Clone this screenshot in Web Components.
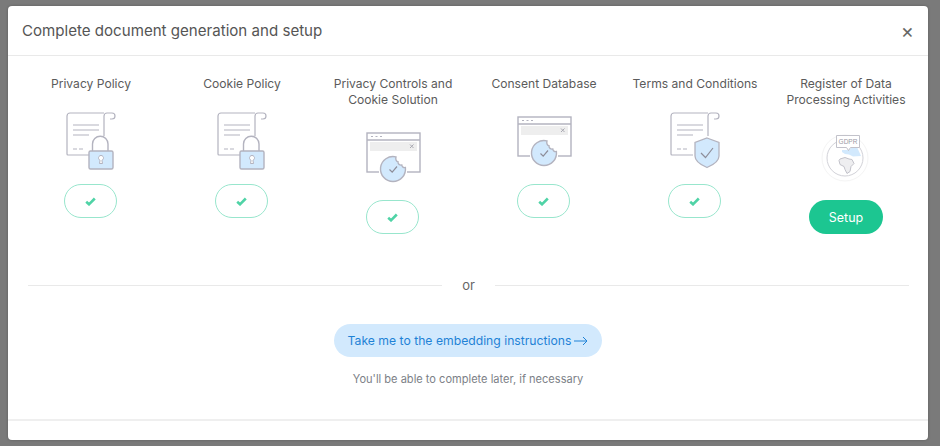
<!DOCTYPE html>
<html>
<head>
<meta charset="utf-8">
<title>Complete document generation and setup</title>
<style>
    html, body { margin: 0; height: 100%; }
    body {
        background: #7a7a7a;
        font-family: "Inter", "Liberation Sans", sans-serif;
        color: #5b5b5b;
    }
</style>
</head>
<body>
<setup-modal heading="Complete document generation and setup">
    <doc-item label="Privacy Policy"><doc-icon kind="lock"></doc-icon><check-pill></check-pill></doc-item>
    <doc-item label="Cookie Policy"><doc-icon kind="lock"></doc-icon><check-pill></check-pill></doc-item>
    <doc-item label="Privacy Controls and Cookie Solution"><doc-icon kind="cookie"></doc-icon><check-pill></check-pill></doc-item>
    <doc-item label="Consent Database"><doc-icon kind="cookie"></doc-icon><check-pill></check-pill></doc-item>
    <doc-item label="Terms and Conditions"><doc-icon kind="shield"></doc-icon><check-pill></check-pill></doc-item>
    <doc-item label="Register of Data Processing Activities"><doc-icon kind="gdpr"></doc-icon><setup-button>Setup</setup-button></doc-item>
    <or-divider slot="after"></or-divider>
    <embed-action slot="after" note="You'll be able to complete later, if necessary">Take me to the embedding instructions</embed-action>
</setup-modal>

<script>
const modalTemplate = document.createElement('template');
modalTemplate.innerHTML = `
<style>
    :host {
        display: flex;
        flex-direction: column;
        box-sizing: border-box;
        width: 920px;
        height: 434px;
        margin: 6px 0 0 8px;
        background: #fff;
        border-radius: 4px;
        box-shadow: 0 0 3px rgba(0, 0, 0, .25);
    }
    header {
        display: flex;
        align-items: center;
        justify-content: space-between;
        box-sizing: border-box;
        height: 50px;
        padding: 0 14px;
        border-bottom: 1px solid #e9e9e9;
    }
    h1 {
        margin: 0;
        font-size: 15.1px;
        font-weight: 400;
        color: #555;
    }
    .close {
        font-size: 20px;
        line-height: 20px;
        color: #666;
    }
    .items {
        display: grid;
        grid-template-columns: repeat(6, 151px);
        padding: 20px 7.5px 0;
        height: 214px;
        box-sizing: border-box;
    }
    .after {
        display: flex;
        flex-direction: column;
        flex: 1;
    }
    footer {
        height: 19px;
        border-top: 2px solid #efefef;
    }
</style>
<header>
    <h1></h1>
    <span class="close">×</span>
</header>
<div class="items"><slot></slot></div>
<div class="after"><slot name="after"></slot></div>
<footer></footer>
`;

class SetupModal extends HTMLElement {
    constructor() {
        super();
        this.attachShadow({ mode: "open" });
    }

    connectedCallback() {
        const clone = modalTemplate.content.cloneNode(true);
        clone.querySelector('h1').textContent = this.getAttribute('heading');
        this.shadowRoot.appendChild(clone);
    }
}

const itemTemplate = document.createElement('template');
itemTemplate.innerHTML = `
<style>
    :host {
        display: flex;
        flex-direction: column;
        align-items: center;
    }
    .label {
        box-sizing: border-box;
        width: 100%;
        padding: 0 8px;
        font-size: 12.1px;
        line-height: 16px;
        text-align: center;
        color: #5b5b5b;
    }
    ::slotted(doc-icon) { margin: 16px 0 12px; }
</style>
<div class="label"></div>
<slot></slot>
`;

class DocItem extends HTMLElement {
    constructor() {
        super();
        this.attachShadow({ mode: "open" });
    }

    connectedCallback() {
        const clone = itemTemplate.content.cloneNode(true);
        clone.querySelector('.label').textContent = this.getAttribute('label');
        this.shadowRoot.appendChild(clone);
    }
}

// paths shared by the icons, on a 64x64 box
const STROKE = '#b3b3bf';
const sheet = `
    <path d="M45 5H11a3 3 0 0 0-3 3v38a1 1 0 0 0 1 1h21M45 28V8a3 3 0 0 1 3-3h5a3 3 0 0 1 0 6h-2" fill="#fff" stroke="${STROKE}" stroke-width="1.2"/>
    <path d="M14 17h26M14 22h26M14 27h16M14 41h4M20 41h4" fill="none" stroke="${STROKE}" stroke-width="1.2"/>`;

const iconMarkup = {
    lock: sheet + `
    <path d="M33.5 43V36a7.7 7.700 0 0 1 15.500 0V43" fill="#fff" stroke="${STROKE}" stroke-width="1.4"/>
    <rect x="30" y="43" width="24" height="18" rx="1.5" fill="#d2e9fd" stroke="${STROKE}" stroke-width="1.4"/>
    <path d="M40.500 55.500h3l-.6-3.200a2.500 2.500 0 1 0-1.800 0z" fill="#fff" stroke="${STROKE}" stroke-width="1"/>`,
    shield: sheet + `
    <path d="M44 30l12 4.500V48c0 5-6 9-12 11.500C38 57 32 53 32 48V34.500z" fill="#d2e9fd" stroke="${STROKE}" stroke-width="1.3"/>
    <path d="M38 45l4.500 4.500L50 40" fill="none" stroke="#8e8e9a" stroke-width="1.2"/>`,
    cookie: `
    <rect x="6" y="9" width="53" height="39" fill="#fff" stroke="${STROKE}" stroke-width="1.4"/>
    <path d="M6 16h53" stroke="${STROKE}" stroke-width="1.4"/>
    <path d="M10 12.500h2M14.500 12.500h2M19 12.500h2" stroke="${STROKE}" stroke-width="1.200"/>
    <rect x="9" y="18" width="47" height="9" fill="#eeeeee"/>
    <path d="M49 20.500l3.500 3.500M52.500 20.500L49 24" stroke="#a9a9b2" stroke-width="1"/>
    <rect x="18" y="47" width="28" height="3" fill="#fff"/>
    <path d="M35 32.900A12.500 12.500 0 1 0 44.400 43.500c-2 .4-3.400-.6-3.600-2.500-2.200.4-4-.9-3.800-3.200-2-.5-2.600-2.700-2-4.900z" fill="#d2e9fd" stroke="${STROKE}" stroke-width="1.400"/>
    <path d="M28.500 45.500l2.700 2.700 4.800-5.700" fill="none" stroke="#8e8e9a" stroke-width="1.200"/>`,
    gdpr: `
    <circle cx="31" cy="34" r="23" fill="none" stroke="#f4f4f4" stroke-width="1"/>
    <circle cx="31" cy="34" r="18" fill="#fff" stroke="#d2d2d8" stroke-width="1"/>
    <path d="M28 26h5l3-1 3-3 4 1 4 9-8 .5-4-2-4-.500-3-2z" fill="#d2e9fd"/>
    <path d="M26 35l5-1.500 4 1.500 3 .5 2 4-3 3-1 5-3 2-2-4-1-3-4-2-1-4z" fill="#eeeef0" stroke="#c2c2ca" stroke-width="1"/>
    <path d="M22.500 11.500h23v12h-9l-2 3-2-3h-10z" fill="#fff" stroke="#c2c2ca" stroke-width="1"/>
    <text x="34" y="20" text-anchor="middle" font-size="6.500" font-family="Liberation Sans, sans-serif" fill="#9a9aa5">GDPR</text>`
};

class DocIcon extends HTMLElement {
    constructor() {
        super();
        this.attachShadow({ mode: "open" });
    }

    connectedCallback() {
        this.shadowRoot.innerHTML = `
        <style>
            :host { display: block; width: 64px; height: 64px; }
            svg { display: block; }
        </style>
        <svg width="64" height="64" viewBox="0 0 64 64">${iconMarkup[this.getAttribute('kind')]}</svg>`;
    }
}

class CheckPill extends HTMLElement {
    constructor() {
        super();
        this.attachShadow({ mode: "open" }).innerHTML = `
        <style>
            :host {
                display: flex;
                align-items: center;
                justify-content: center;
                box-sizing: border-box;
                width: 53px;
                height: 34px;
                margin-right: 1px;
                border: 1px solid #98e6cd;
                border-radius: 17px;
            }
        </style>
        <svg width="11" height="9" viewBox="0 0 11 9"><path d="M1.200 4.800L4 7.300 9.800 1.500" fill="none" stroke="#4fd3a6" stroke-width="2.600"/></svg>`;
    }
}

class SetupButton extends HTMLElement {
    constructor() {
        super();
        this.attachShadow({ mode: "open" }).innerHTML = `
        <style>
            :host {
                display: flex;
                align-items: center;
                justify-content: center;
                width: 74px;
                height: 34px;
                border-radius: 17px;
                background: #1cc691;
                color: #fff;
                font-size: 12.5px;
            }
        </style>
        <slot></slot>`;
    }
}

class OrDivider extends HTMLElement {
    constructor() {
        super();
        this.attachShadow({ mode: "open" }).innerHTML = `
        <style>
            :host {
                display: flex;
                align-items: center;
                gap: 20px;
                margin: 0 19px 0 20px;
                height: 30px;
                font-size: 13px;
                color: #666;
            }
            i { flex: 1; height: 1px; background: #e9e9e9; }
        </style>
        <i></i><span>or</span><i></i>`;
    }
}

const actionTemplate = document.createElement('template');
actionTemplate.innerHTML = `
<style>
    :host {
        display: flex;
        flex-direction: column;
        align-items: center;
        padding-top: 24px;
    }
    .go {
        display: flex;
        align-items: center;
        gap: 3px;
        justify-content: center;
        box-sizing: border-box;
        width: 268px;
        height: 33px;
        border-radius: 17px;
        background: #d2e9fd;
        color: #1f82d6;
        font-size: 12.2px;
    }
    .note {
        margin-top: 14px;
        font-size: 11.05px;
        line-height: 16px;
        color: #7c7f87;
    }
</style>
<div class="go"><slot></slot>
    <svg width="14" height="10" viewBox="0 0 14 10"><path d="M0 5h13M9 1l4 4-4 4" fill="none" stroke="#1f82d6" stroke-width="1"/></svg>
</div>
<div class="note"></div>
`;

class EmbedAction extends HTMLElement {
    constructor() {
        super();
        this.attachShadow({ mode: "open" });
    }

    connectedCallback() {
        const clone = actionTemplate.content.cloneNode(true);
        clone.querySelector('.note').textContent = this.getAttribute('note');
        this.shadowRoot.appendChild(clone);
    }
}

customElements.define('setup-modal', SetupModal);
customElements.define('doc-item', DocItem);
customElements.define('doc-icon', DocIcon);
customElements.define('check-pill', CheckPill);
customElements.define('setup-button', SetupButton);
customElements.define('or-divider', OrDivider);
customElements.define('embed-action', EmbedAction);
</script>
</body>
</html>
